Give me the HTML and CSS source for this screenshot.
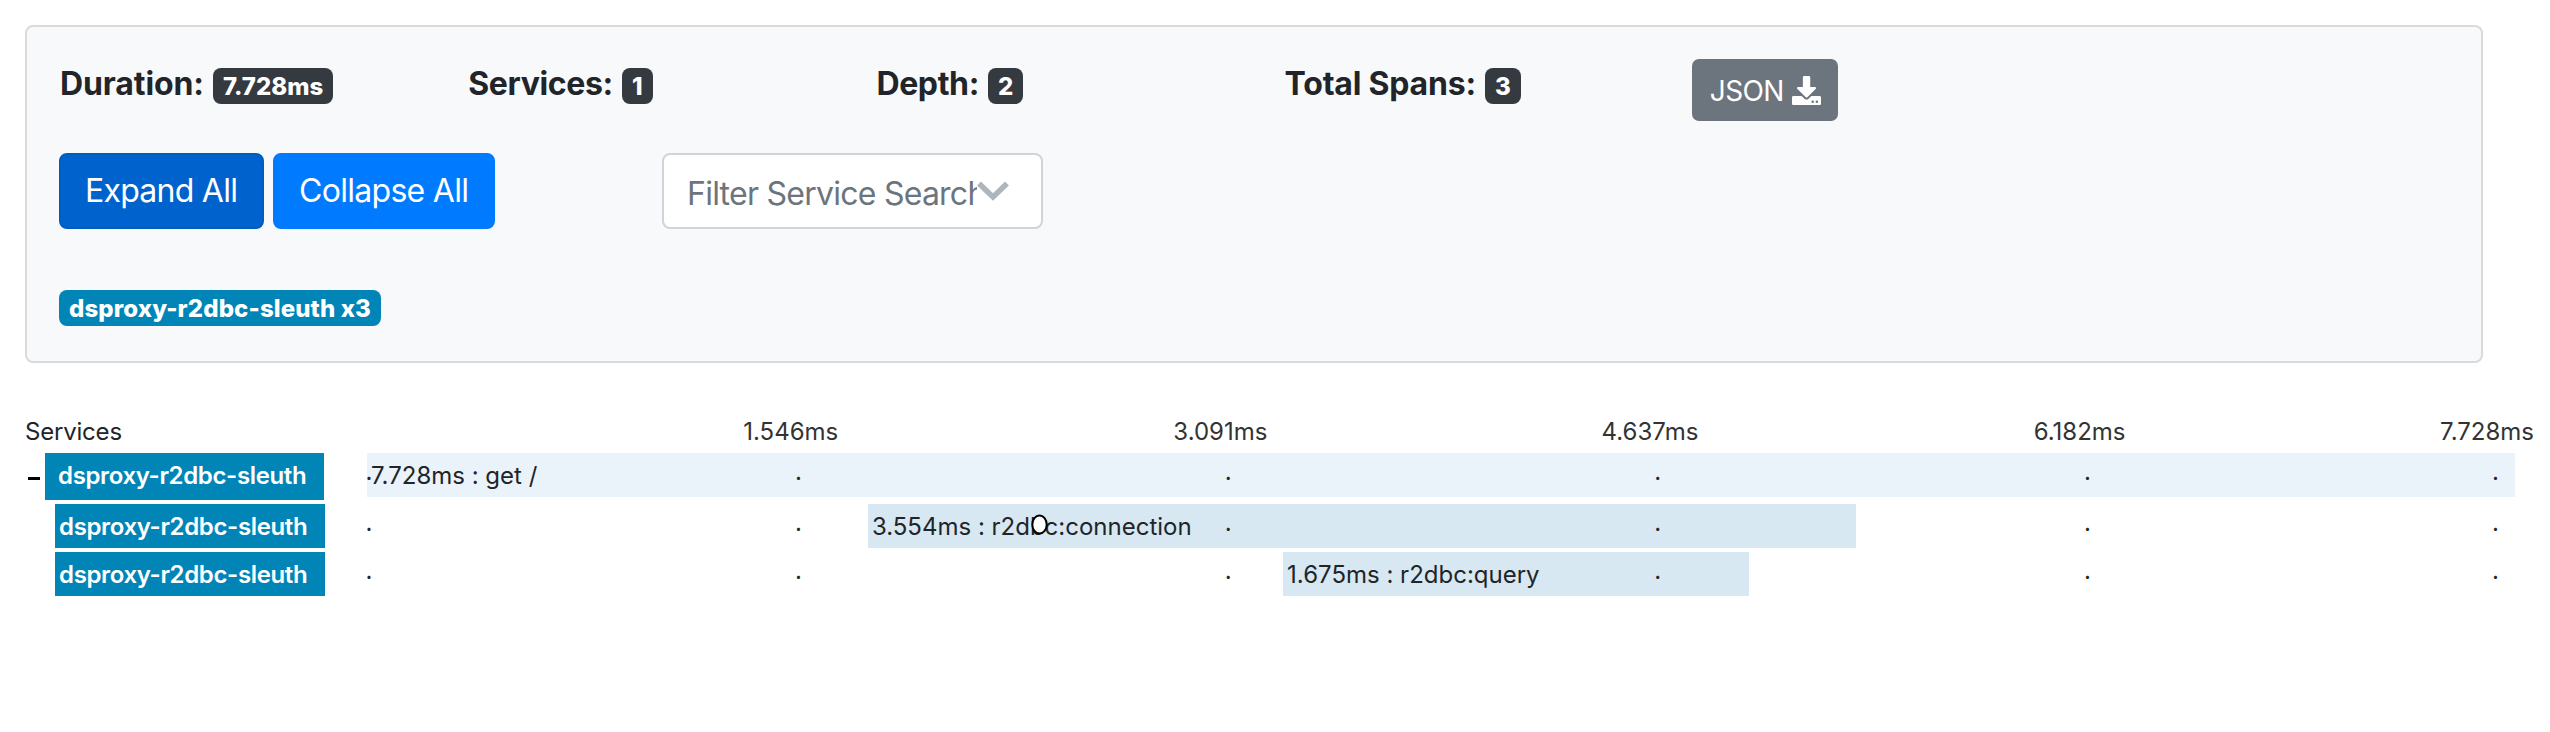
FILE: index.html
```html
<!DOCTYPE html>
<html lang="en">
<head>
<meta charset="utf-8">
<title>Trace</title>
<link rel="stylesheet" href="styles.css">
</head>
<body>
<main class="page">
  <section class="summary">
    <div class="stats">
      <div class="stat"><span class="stat-name duration">Duration:</span><span class="badge">7.728ms</span></div>
      <div class="stat"><span class="stat-name services">Services:</span><span class="badge">1</span></div>
      <div class="stat"><span class="stat-name depth">Depth:</span><span class="badge">2</span></div>
      <div class="stat"><span class="stat-name spans">Total Spans:</span><span class="badge">3</span></div>
      <a class="json-button"><span class="json-text">JSON</span><svg class="json-icon" viewBox="0 0 28 28"><path fill="#fff" fill-rule="evenodd" d="M11.8 0h4.400c.8 0 1.400.6 1.400 1.300v9.200h4.600c1 0 1.500 1.200.8 1.900l-8.200 8.200c-.4.4-1.100.4-1.500 0L5 12.400c-.7-.7-.2-1.900.8-1.900h4.700V1.300c0-.7.5-1.300 1.300-1.300zM1.300 19.200h8l2.700 2.700c1.100 1.100 2.900 1.100 4 0l2.700-2.700h8c.7 0 1.300.6 1.300 1.300v6.200c0 .7-.6 1.300-1.300 1.300H1.300C.6 28 0 27.400 0 26.700v-6.200c0-.7.6-1.300 1.300-1.300zM20 23.600a1.200 1.200 0 1 0 0 2.400 1.200 1.200 0 1 0 0-2.400zM24 23.600a1.200 1.200 0 1 0 0 2.400 1.200 1.200 0 1 0 0-2.400z"/></svg></a>
    </div>
    <div class="controls">
      <button class="button active"><span class="expand-text">Expand All</span></button>
      <button class="button"><span class="collapse-text">Collapse All</span></button>
      <div class="select">
        <span class="placeholder">Filter Service Search</span>
        <svg class="chevron" viewBox="0 0 32 20"><path d="M2 2.500 16 16 30 2.500" fill="none" stroke="#adb5bd" stroke-width="5.500"/></svg>
      </div>
    </div>
    <div class="chips"><span class="badge service">dsproxy-r2dbc-sleuth x3</span></div>
  </section>

  <section class="timeline">
    <div class="head">
      <span class="head-title">Services</span>
      <div class="marks"><span>1.546ms</span><span>3.091ms</span><span>4.637ms</span><span>6.182ms</span><span>7.728ms</span></div>
    </div>
    <div class="row root">
      <div class="label-cell"><span class="toggle"></span><span class="label">dsproxy-r2dbc-sleuth</span></div>
      <div class="track">
        <div class="bar" style="margin-left:0;width:100%"><span class="span-root">7.728ms : get /</span></div>
        <div class="dots"><i>.</i><i>.</i><i>.</i><i>.</i><i>.</i><i>.</i></div>
      </div>
    </div>
    <div class="row">
      <div class="label-cell"><span class="label">dsproxy-r2dbc-sleuth</span></div>
      <div class="track">
        <div class="bar" style="margin-left:23.320%;width:46%"><span class="span-conn">3.554ms : r2dbc:connection</span></div>
        <div class="dots"><i>.</i><i>.</i><i>.</i><i>.</i><i>.</i><i>.</i></div>
        <svg class="pointer" viewBox="0 0 17 21"><ellipse cx="8.500" cy="10.500" rx="7.200" ry="9" fill="#fff" stroke="#000" stroke-width="2"/></svg>
      </div>
    </div>
    <div class="row">
      <div class="label-cell"><span class="label">dsproxy-r2dbc-sleuth</span></div>
      <div class="track">
        <div class="bar" style="margin-left:42.650%;width:21.700%"><span class="span-query">1.675ms : r2dbc:query</span></div>
        <div class="dots"><i>.</i><i>.</i><i>.</i><i>.</i><i>.</i><i>.</i></div>
      </div>
    </div>
  </section>
</main>
</body>
</html>
```
FILE: styles.css
```css
* { box-sizing: border-box; }
body {
  margin: 0;
  background: #fff;
  color: #212529;
  font-family: Inter, "Liberation Sans", sans-serif;
  font-size: 24px;
  line-height: 36px;
  white-space: nowrap;
}
.page { padding: 25px 16px 0 25px; }

.summary {
  width: 2458px;
  height: 338px;
  padding: 32px;
  background: #f8f9fb;
  border: 2px solid #d9dadb;
  border-radius: 8px;
}
.stats { display: grid; grid-template-columns: repeat(4, 408.200px) auto; justify-content: start; height: 94px; align-items: start; }
.stat { display: flex; gap: 9px; padding: 9px 0 0 1px; }
.stat-name { font-size: 32px; font-weight: 700; line-height: 31px; letter-spacing: -0.350px; }
.duration { letter-spacing: -0.100px; }
.spans { letter-spacing: -0.200px; }
.badge {
  display: block;
  height: 36px;
  padding: 0 10px;
  border-radius: 8px;
  background: #343a40;
  color: #fff;
  font-weight: 800;
  line-height: 37px;
}
.service { background: #0085b6; letter-spacing: 0.120px; }
.json-button {
  display: flex;
  align-items: center;
  gap: 8px;
  width: 146px;
  height: 62px;
  padding: 1px 0 0 18px;
  border-radius: 7px;
  background: #6c757d;
  color: #fff;
  font-size: 28px;
}
.json-text { letter-spacing: -0.600px; padding-top: 1px; }
.json-icon { width: 29px; height: 29px; }
.controls { display: flex; height: 137px; align-items: flex-start; }
.button {
  height: 76px;
  width: 222px;
  margin: 0 167px 0 0;
  padding: 0 0 0 24px;
  border: 2px solid #007bff;
  border-radius: 8px;
  background: #007bff;
  color: #fff;
  font: 32px/72px Inter, "Liberation Sans", sans-serif;
  letter-spacing: -0.700px;
  text-align: left;
}
.button.active { width: 205px; margin-right: 9px; background: #0062cc; border-color: #005cbf; letter-spacing: -0.750px; }
.select {
  display: flex;
  align-items: center;
  width: 381px;
  height: 76px;
  padding-left: 23px;
  border: 2px solid #ced4da;
  border-radius: 8px;
  background: #fff;
  color: #6c757d;
}
.placeholder { width: 290px; overflow: hidden; font-size: 32px; line-height: 46px; padding-top: 5px; letter-spacing: -0.750px; }
.chevron { width: 32px; height: 20px; flex: none; }
.chips { display: flex; }

.timeline { padding-top: 51px; }
.head { display: flex; height: 39px; line-height: 36px; }
.head-title { width: 551px; letter-spacing: -0.200px; }
.marks { display: grid; grid-template-columns: repeat(4, 429.600px) 1fr; width: 1958px; color: #333; text-align: center; }
.marks span:last-child { text-align: right; }
.row { display: flex; height: 48px; }
.root { height: 51px; }
.label-cell { display: flex; width: 342px; padding-left: 30px; }
.root .label-cell { padding-left: 3px; }
.toggle { width: 12px; height: 3px; margin: 24px 5px 0 0; background: #000; }
.label {
  width: 270px;
  height: 44px;
  padding-left: 4px;
  background: #0085b6;
  color: #fff;
  font-weight: 600;
  line-height: 45px;
  letter-spacing: -0.350px;
}
.root .label { width: 279px; height: 47px; padding-left: 13px; }
.track { position: relative; width: 2148px; height: 44px; }
.bar { height: 44px; padding-left: 4px; background: #d8e8f2; line-height: 45px; }
.root .bar { background: #eaf3fa; }
.dots {
  position: absolute;
  inset: 0 1.500px 0 -1.500px;
  display: grid;
  grid-template-columns: repeat(4, 20%) 19% 1%;
  line-height: 37px;
}
.dots i { font-style: normal; }
.pointer { position: absolute; left: 664px; top: 10px; width: 17px; height: 21px; }
```
